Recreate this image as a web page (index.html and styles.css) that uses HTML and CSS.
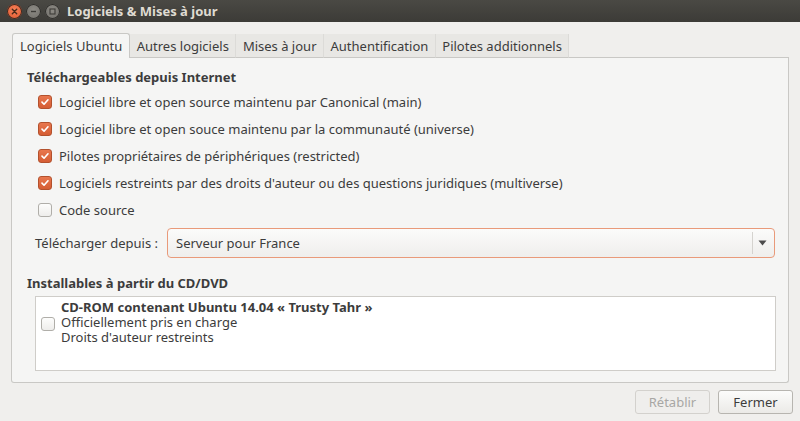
FILE: index.html
```html
<!DOCTYPE html>
<html lang="fr">
<head>
<meta charset="utf-8">
<link rel="stylesheet" href="styles.css">
</head>
<body>
<div class="window">
  <div class="titlebar">
    <div class="wbtns">
      <span class="wb close"><svg width="13" height="13" viewBox="0 0 13 13"><path d="M4.3 4.3l4.4 4.4M8.7 4.3l-4.4 4.4" stroke="#4a2a1a" stroke-width="1.4" stroke-linecap="round"/></svg></span>
      <span class="wb min"><svg width="13" height="13" viewBox="0 0 13 13"><path d="M4 6.5h5" stroke="#3c3b37" stroke-width="1.4"/></svg></span>
      <span class="wb max"><svg width="13" height="13" viewBox="0 0 13 13"><rect x="4" y="4" width="5" height="5" fill="none" stroke="#3c3b37" stroke-width="1.1"/></svg></span>
    </div>
    <div class="title">Logiciels &amp; Mises à jour</div>
  </div>
  <div class="content">
    <div class="notebook">
      <div class="tabs">
        <div class="tab active">Logiciels Ubuntu</div>
        <div class="tab">Autres logiciels</div>
        <div class="tab">Mises à jour</div>
        <div class="tab">Authentification</div>
        <div class="tab">Pilotes additionnels</div>
      </div>
      <div class="pane">
        <div class="heading">Téléchargeables depuis Internet</div>
        <div class="checks">
          <label class="check"><span class="box on"><svg width="14" height="14" viewBox="0 0 14 14"><path d="M3.5 7.2l2.4 2.4 4.6-5.2" fill="none" stroke="#fff" stroke-width="1.9" stroke-linecap="round" stroke-linejoin="round"/></svg></span>Logiciel libre et open source maintenu par Canonical (main)</label>
          <label class="check"><span class="box on"><svg width="14" height="14" viewBox="0 0 14 14"><path d="M3.5 7.2l2.4 2.4 4.6-5.2" fill="none" stroke="#fff" stroke-width="1.9" stroke-linecap="round" stroke-linejoin="round"/></svg></span>Logiciel libre et open souce maintenu par la communauté (universe)</label>
          <label class="check"><span class="box on"><svg width="14" height="14" viewBox="0 0 14 14"><path d="M3.5 7.2l2.4 2.4 4.6-5.2" fill="none" stroke="#fff" stroke-width="1.9" stroke-linecap="round" stroke-linejoin="round"/></svg></span>Pilotes propriétaires de périphériques (restricted)</label>
          <label class="check"><span class="box on"><svg width="14" height="14" viewBox="0 0 14 14"><path d="M3.5 7.2l2.4 2.4 4.6-5.2" fill="none" stroke="#fff" stroke-width="1.9" stroke-linecap="round" stroke-linejoin="round"/></svg></span>Logiciels restreints par des droits d'auteur ou des questions juridiques (multiverse)</label>
          <label class="check"><span class="box"></span>Code source</label>
        </div>
        <div class="source-row">
          <span class="src-label">Télécharger depuis :</span>
          <div class="combo">
            <span class="combo-text">Serveur pour France</span>
            <span class="combo-arrow"><svg width="9" height="6" viewBox="0 0 9 6"><path d="M0.5 0.5h8L4.5 5.5z" fill="#4c4c4c"/></svg></span>
          </div>
        </div>
        <div class="heading heading2">Installables à partir du CD/DVD</div>
        <div class="cdlist">
          <div class="cditem">
            <span class="box"></span>
            <div class="cdtext">
              <div class="cdline cdtitle">CD-ROM contenant Ubuntu 14.04 « Trusty Tahr »</div>
              <div class="cdline">Officiellement pris en charge</div>
              <div class="cdline">Droits d'auteur restreints</div>
            </div>
          </div>
        </div>
      </div>
    </div>
    <div class="actions">
      <button class="btn disabled">Rétablir</button>
      <button class="btn">Fermer</button>
    </div>
  </div>
</div>
</body>
</html>
```
FILE: styles.css
```css
* { box-sizing: border-box; }
html, body { margin: 0; padding: 0; }
body {
  width: 800px;
  height: 421px;
  overflow: hidden;
  background: #f0efed;
  font-family: "Noto Sans", "DejaVu Sans", sans-serif;
  font-size: 13px;
  color: #3c3c3c;
}
.window { width: 800px; height: 421px; display: flex; flex-direction: column; }
.titlebar {
  height: 22px;
  background: linear-gradient(#4a4944, #3c3b37);
  display: flex;
  align-items: center;
  padding-left: 7px;
  flex: none;
}
.wbtns { display: flex; gap: 4px; align-items: center; }
.wb {
  width: 15px; height: 15px; border-radius: 50%;
  display: flex; align-items: center; justify-content: center;
}
.wb.close { background: radial-gradient(circle at 50% 40%, #f5825a, #e0542a); box-shadow: 0 0 0 1px #3a2b24 inset; }
.wb.min, .wb.max { background: radial-gradient(circle at 50% 40%, #8d8b85, #6d6b66); box-shadow: 0 0 0 1px #2f2e2b inset; }
.title {
  margin-left: 7px;
  color: #dfdbd2;
  font-weight: bold;
  font-size: 13px;
}
.content { flex: 1; padding: 11px 7px 0 11px; display: flex; flex-direction: column; }
.notebook { display: flex; flex-direction: column; width: 778px; }
.tabs { display: flex; height: 25px; padding-left: 1px; align-items: flex-end; }
.tab {
  height: 24px;
  padding: 0 6.5px;
  display: flex;
  align-items: center;
  background: #e8e7e4;
  border-right: 1px solid #dcdbd8;
  border-bottom: 1px solid #c9c8c5;
  color: #3c3c3c;
}
.tab.active {
  height: 25px;
  background: #f5f5f4;
  border: 1px solid #c9c8c5;
  border-bottom: none;
  border-radius: 3px 3px 0 0;
  padding: 0 7px;
}
.tabs::after { content: ""; flex: 1; border-bottom: 1px solid #c9c8c5; height: 100%; }
.pane {
  height: 325px;
  background: #f5f5f4;
  border: 1px solid #c9c8c5;
  border-top: none;
  border-radius: 0 0 3px 3px;
  padding: 11px 11px 0 15px;
}
.heading { font-weight: bold; color: #3c3c3c; line-height: 16px; }
.checks { display: flex; flex-direction: column; gap: 11px; padding-left: 11px; margin-top: 9px; }
.check { display: flex; align-items: center; gap: 7px; height: 16px; }
.box {
  width: 14px; height: 14px; border-radius: 3px;
  border: 1px solid #b0aea9;
  background: linear-gradient(#fdfdfc, #eeedeb);
  flex: none;
  display: flex; align-items: center; justify-content: center;
}
.box.on { background: linear-gradient(#e8774e, #d55d34); border-color: #b3512d; }
.source-row { display: flex; align-items: center; margin-top: 10px; padding-left: 8px; }
.src-label { width: 132px; }
.combo {
  flex: 1;
  height: 30px;
  margin-right: 2px;
  border: 1px solid #e99a7a;
  border-radius: 4px;
  background: linear-gradient(#fbfbfa, #efeeec);
  display: flex;
  align-items: center;
  padding-left: 8px;
}
.combo-text { flex: 1; }
.combo-arrow {
  width: 22px; height: 22px;
  border-left: 1px solid #d5d3cf;
  display: flex; align-items: center; justify-content: flex-end;
  padding-right: 7px;
}
.heading2 { margin-top: 17px; }
.cdlist {
  margin: 5px 0 0 8px;
  width: 741px;
  height: 75px;
  background: #ffffff;
  border: 1px solid #cfcdc9;
}
.cditem { display: flex; align-items: center; padding: 3px 0 0 5px; }
.cditem .box { margin-top: 2px; }
.cdtext { margin-left: 6px; }
.cdline { height: 15px; line-height: 15px; overflow: visible; white-space: nowrap; }
.cdtitle { font-weight: bold; }
.actions { display: flex; justify-content: flex-end; gap: 8px; margin-top: 7px; }
.btn {
  font: inherit;
  height: 24px;
  width: 75px;
  border: 1px solid #b7b5b0;
  border-radius: 3px;
  background: linear-gradient(#fcfcfb, #ebeae7);
  color: #3c3c3c;
  padding: 0;
}
.btn.disabled { color: #a8a7a4; border-color: #d3d1cd; background: #efeeec; }
```
